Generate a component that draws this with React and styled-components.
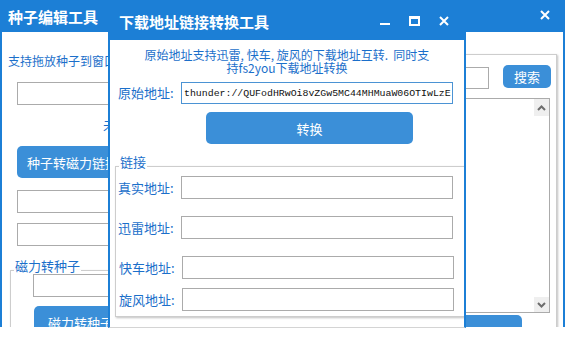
import React from "react";
import styled, { createGlobalStyle } from "styled-components";

const TITLE_BLUE = "#1c7fd6";
const BUTTON_BLUE = "#3b8fd8";
const LABEL_BLUE = "#1b6fca";

const GlobalStyle = createGlobalStyle`
  html, body {
    margin: 0;
    padding: 0;
    background: #ffffff;
  }
  body {
    font-family: "Noto Sans CJK SC", "Noto Sans", sans-serif;
    overflow: hidden;
  }
`;

const Desktop = styled.div`
  position: relative;
  width: 565px;
  height: 341px;
  overflow: hidden;
  background: #fff;
`;

/* windows sit on the desktop at their own coordinates */
const Window = styled.div`
  position: absolute;
  left: ${(p) => p.$x}px;
  top: 0;
  width: ${(p) => p.$w}px;
  height: ${(p) => p.$h}px;
  display: flex;
  flex-direction: column;
  background: #fff;
`;

const TitleBar = styled.div`
  flex: none;
  box-sizing: border-box;
  height: ${(p) => p.$h}px;
  display: flex;
  align-items: center;
  padding: ${(p) => p.$pad};
  background: ${TITLE_BLUE};
  color: #fff;
`;

const Title = styled.div`
  flex: 1;
  margin-top: ${(p) => p.$dy || 0}px;
  font-size: 15px;
  font-weight: 700;
  line-height: 18px;
  white-space: nowrap;
`;

const Controls = styled.div`
  display: flex;
  align-items: center;
  margin-top: ${(p) => p.$dy || 0}px;

  svg + svg {
    margin-left: ${(p) => p.$gap || 0}px;
  }
`;

const Body = styled.div`
  flex: 1;
  min-height: 0;
  display: flex;
  flex-direction: ${(p) => (p.$row ? "row" : "column")};
  align-items: flex-start;
  border-left: 2px solid ${TITLE_BLUE};
  border-right: 2px solid ${TITLE_BLUE};
  border-bottom: ${(p) => p.$bottom || "none"};
  overflow: hidden;
`;

const LeftPane = styled.div`
  flex: none;
  width: 292px;
  display: flex;
  flex-direction: column;
  align-items: flex-start;
`;

const RightPane = styled.div`
  flex: 1;
  align-self: stretch;
  padding: 0 6px;
  display: flex;
  flex-direction: column;
`;

const Hint = styled.div`
  margin: 22px 0 0 6px;
  font-size: 12px;
  line-height: 14px;
  color: ${LABEL_BLUE};
  white-space: nowrap;
`;

const Status = styled.div`
  margin: 13px 0 0 101px;
  font-size: 13px;
  line-height: 14px;
  color: ${LABEL_BLUE};
  white-space: nowrap;
`;

const Notice = styled.div`
  align-self: stretch;
  margin-top: 8px;
  font-size: 12px;
  line-height: 13px;
  text-align: center;
  color: ${LABEL_BLUE};
  white-space: pre;
`;

const TextBox = styled.input`
  display: block;
  box-sizing: border-box;
  flex: none;
  width: ${(p) => p.$w}px;
  height: ${(p) => p.$h || 23}px;
  margin: ${(p) => p.$mt || 0}px 0 0 ${(p) => p.$ml || 0}px;
  padding: 0 1px 0 2px;
  border: 1px solid ${(p) => (p.$accent ? "#4b93d4" : "#ababab")};
  border-radius: 0;
  background: #fff;
  font-family: "Liberation Mono", monospace;
  font-size: 9.9px;
  color: #111;
  outline: none;
`;

const Button = styled.button`
  display: block;
  box-sizing: border-box;
  flex: none;
  width: ${(p) => p.$w}px;
  height: ${(p) => p.$h || 32}px;
  margin: ${(p) => p.$mt || 0}px ${(p) => p.$mr || 0}px 0 ${(p) => p.$ml || 0}px;
  padding: 0;
  border: none;
  border-radius: 5px;
  background: ${BUTTON_BLUE};
  color: #fff;
  font-family: "Noto Sans CJK SC", sans-serif;
  font-size: 13px;
  line-height: 1;
  white-space: nowrap;
`;

const Group = styled.fieldset`
  display: block;
  box-sizing: border-box;
  flex: none;
  width: ${(p) => p.$w}px;
  min-width: 0;
  height: ${(p) => (p.$h ? `${p.$h}px` : "auto")};
  margin: ${(p) => p.$mt || 0}px 0 0 ${(p) => p.$ml || 0}px;
  padding: 0 0 ${(p) => p.$pb || 0}px 0;
  border: 1px solid #cdcdcd;
  box-shadow: 1px 1px 2px rgba(0, 0, 0, 0.25);
  background: #fff;
`;

const Legend = styled.legend`
  margin-left: 3px;
  padding: 0 1px 8px;
  font-size: 13px;
  line-height: 12px;
  color: ${LABEL_BLUE};
  white-space: nowrap;
`;

const FieldRow = styled.div`
  display: flex;
  align-items: center;
  margin-top: ${(p) => p.$mt || 0}px;
  padding-left: ${(p) => p.$pl || 0}px;
`;

const Label = styled.span`
  flex: none;
  width: ${(p) => p.$w || 63}px;
  font-size: 13px;
  line-height: 16px;
  color: ${LABEL_BLUE};
  white-space: nowrap;
`;

const Panel = styled.div`
  flex: 1;
  margin-top: 22px;
  padding: 10px 5px 0 5px;
  display: flex;
  flex-direction: column;
  border: 1px solid #cdcdcd;
  border-bottom: none;
  box-shadow: 1px 1px 2px rgba(0, 0, 0, 0.25);
`;

const SearchRow = styled.div`
  display: flex;
  justify-content: flex-end;
  align-items: flex-start;
`;

const ListBox = styled.div`
  flex: none;
  height: 215px;
  margin: 9px 1px 0 0;
  display: flex;
  border: 1px solid #ababab;
  box-sizing: border-box;
`;

const ListArea = styled.div`
  flex: 1;
`;

const ScrollBar = styled.div`
  width: 15px;
  display: flex;
  flex-direction: column;
  justify-content: space-between;
`;

const ScrollButton = styled.div`
  height: ${(p) => p.$h}px;
  display: flex;
  align-items: center;
  justify-content: center;
  background: #efefef;
`;

const Chevron = ({ up }) => (
  <svg width="9" height="6" viewBox="0 0 9 6">
    <polyline
      points={up ? "1,5 4.5,1.5 8,5" : "1,1 4.5,4.5 8,1"}
      fill="none"
      stroke="#6d6d6d"
      strokeWidth="2"
    />
  </svg>
);

const CloseIcon = () => (
  <svg width="10" height="10" viewBox="0 0 10 10">
    <path d="M1 1L9 9M9 1L1 9" stroke="#fff" strokeWidth="2" />
  </svg>
);

const MinIcon = () => (
  <svg width="10" height="10" viewBox="0 0 10 10">
    <rect x="0" y="7" width="10" height="2" fill="#fff" />
  </svg>
);

const MaxIcon = () => (
  <svg width="11" height="10" viewBox="0 0 11 10">
    <path d="M0 0H11V10H0Z M2 3V8H9V3Z" fill="#fff" fillRule="evenodd" />
  </svg>
);

const TorrentEditor = () => (
  <Window $x={0} $w={565} $h={327}>
    <TitleBar $h={32} $pad="0 15px 0 8px">
      <Title $dy={2}>种子编辑工具</Title>
      <Controls $dy={-3}>
        <CloseIcon />
      </Controls>
    </TitleBar>
    <Body $row>
      <LeftPane>
        <Hint>支持拖放种子到窗口或点击浏览选择种子文件</Hint>
        <TextBox $w={250} $mt={14} $ml={15} />
        <Status>未选择种子文件</Status>
        <Button $w={111} $mt={14} $ml={15}>
          种子转磁力链接
        </Button>
        <TextBox $w={250} $mt={12} $ml={15} />
        <TextBox $w={250} $mt={10} $ml={15} />
        <Group $w={262} $h={90} $mt={14} $ml={8}>
          <Legend>磁力转种子</Legend>
          <TextBox $w={220} $mt={-6} $ml={22} />
          <Button $w={93} $mt={9} $ml={23}>
            磁力转种子
          </Button>
        </Group>
      </LeftPane>
      <RightPane>
        <Panel>
          <SearchRow>
            <TextBox $w={180} $h={22} $mt={2} />
            <Button $w={48} $h={23} $ml={14}>
              搜索
            </Button>
          </SearchRow>
          <ListBox>
            <ListArea />
            <ScrollBar>
              <ScrollButton $h={17}>
                <Chevron up />
              </ScrollButton>
              <ScrollButton $h={15}>
                <Chevron />
              </ScrollButton>
            </ScrollBar>
          </ListBox>
          <SearchRow>
            <Button $w={200} $mt={2} $mr={29} />
          </SearchRow>
        </Panel>
      </RightPane>
    </Body>
  </Window>
);

const LinkConverter = () => (
  <Window $x={108} $w={358} $h={328}>
    <TitleBar $h={40} $pad="0 17px 0 11px">
      <Title $dy={4}>下载地址链接转换工具</Title>
      <Controls $dy={1} $gap={19}>
        <MinIcon />
        <MaxIcon />
        <CloseIcon />
      </Controls>
    </TitleBar>
    <Body $bottom="1px solid #d4d4d4">
      <Notice>
        {"原始地址支持迅雷, 快车, 旋风的下载地址互转.  同时支\n持fs2you下载地址转换"}
      </Notice>
      <FieldRow $mt={8} $pl={8}>
        <Label>原始地址:</Label>
        <TextBox
          $w={272}
          $h={22}
          $accent
          readOnly
          defaultValue="thunder://QUFodHRwOi8vZGw5MC44MHMuaW06OTIwLzE="
        />
      </FieldRow>
      <Button $w={207} $mt={8} $ml={96}>
        转换
      </Button>
      <Group $w={354} $mt={12} $ml={5} $pb={5}>
        <Legend>链接</Legend>
        <FieldRow $pl={2}>
          <Label>真实地址:</Label>
          <TextBox $w={272} />
        </FieldRow>
        <FieldRow $mt={17} $pl={2}>
          <Label>迅雷地址:</Label>
          <TextBox $w={272} />
        </FieldRow>
        <FieldRow $mt={17} $pl={3}>
          <Label>快车地址:</Label>
          <TextBox $w={272} />
        </FieldRow>
        <FieldRow $mt={9} $pl={3}>
          <Label>旋风地址:</Label>
          <TextBox $w={272} />
        </FieldRow>
      </Group>
    </Body>
  </Window>
);

export default function App() {
  return (
    <>
      <GlobalStyle />
      <Desktop>
        <TorrentEditor />
        <LinkConverter />
      </Desktop>
    </>
  );
}
